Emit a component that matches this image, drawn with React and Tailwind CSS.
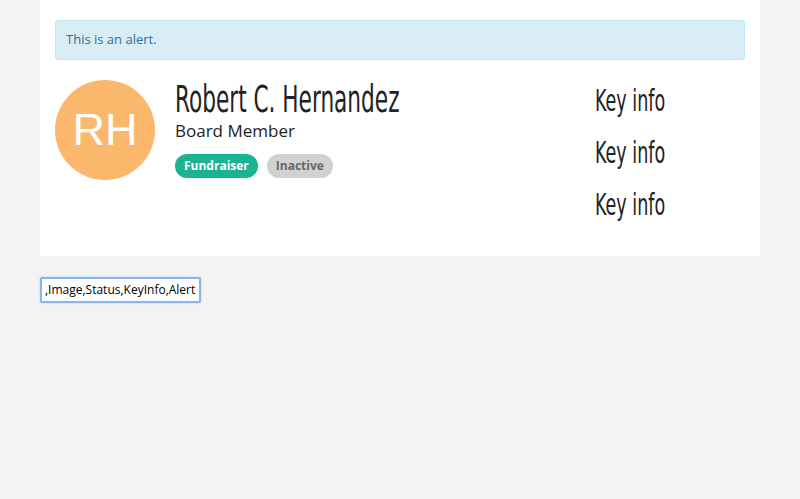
import { useState } from "react";

const badges = [
  { label: "Fundraiser", cls: "bg-[#1ab394] text-white" },
  { label: "Inactive", cls: "bg-[#d1d1d1] text-[#666666]" },
];

// narrow display face (stand-in for Oswald)
const narrow = "font-['DejaVu_Sans_Condensed','Liberation_Sans',sans-serif] inline-block origin-left scale-x-[0.65] whitespace-nowrap";

const ProfileCard = () => {
  return (
    <div className="bg-white mx-[40px] px-[15px] pt-[20px] pb-[20px] h-[256px]">
      <div className="border border-[#bce8f1] bg-[#d9edf7] text-[#31708f] rounded-[3px] h-[40px] px-[10px] flex items-center text-[13px]">
        This is an alert.
      </div>
      <div className="flex mt-[20px]">
        <div className="w-[100px] h-[100px] rounded-full bg-[#fbb86c] flex items-center justify-center text-white text-[45px] font-['Liberation_Sans',sans-serif] shrink-0">
          RH
        </div>
        <div className="ml-[20px] flex-1">
          <h1 className="h-[38px] mt-[1px] text-[#222]">
            <span className={narrow + " text-[37px] leading-[38px]"}>Robert C. Hernandez</span>
          </h1>
          <div className="text-[17px] leading-[22px] text-[#222] mt-[1px]">Board Member</div>
          <div className="flex gap-[9px] mt-[12px]">
            {badges.map((b) => (
              <span
                key={b.label}
                className={"rounded-full px-[9px] h-[24px] flex items-center text-[12px] font-bold " + b.cls}
              >
                {b.label}
              </span>
            ))}
          </div>
        </div>
        <div className="w-[150px] flex flex-col gap-[18px] pt-[4px]">
          {[1, 2, 3].map((i) => (
            <div key={i} className="h-[34px] text-[#222]">
              <span className={narrow + " text-[30px] leading-[34px]"}>Key info</span>
            </div>
          ))}
        </div>
      </div>
    </div>
  );
};

export default function App() {
  const [fields, setFields] = useState(",Image,Status,KeyInfo,Alert");
  return (
    <div className="min-h-[499px] bg-[#f3f3f3] font-['Open_Sans',sans-serif]">
      <ProfileCard />
      <div className="px-[40px] pt-[20px]">
        <input
          className="w-[161px] h-[26px] border-2 border-[#8ab4f0] bg-white px-[3px] text-[12px] text-black outline-none rounded-[2px] shadow-[0_0_2px_#9ec3f5]"
          value={fields}
          onChange={(e) => setFields(e.target.value)}
        />
      </div>
    </div>
  );
}
